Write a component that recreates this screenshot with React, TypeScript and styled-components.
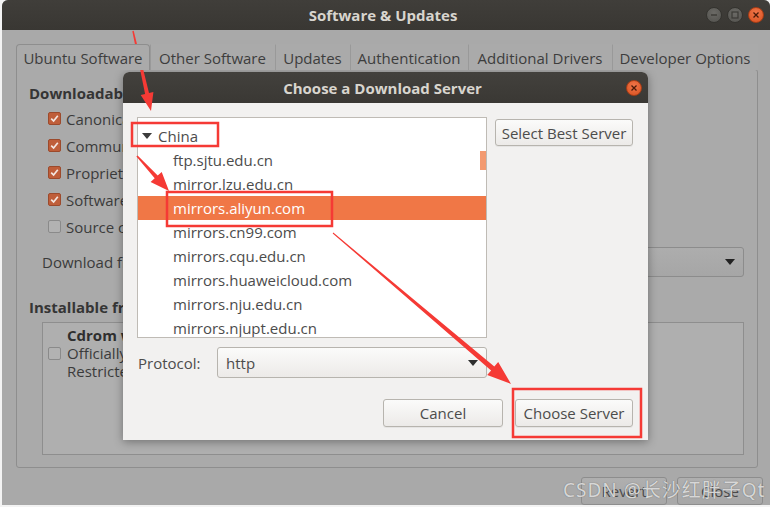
import React from "react";
import styled, { createGlobalStyle } from "styled-components";

const GlobalStyle = createGlobalStyle`
  html, body {
    margin: 0;
    padding: 0;
    background: #f3f3f3;
  }
  body {
    font-family: "Open Sans", "Noto Sans", sans-serif;
    font-size: 15px;
    color: #3b3b3b;
  }
  * {
    box-sizing: border-box;
  }
`;

const Stage = styled.div`
  position: relative;
  width: 770px;
  height: 507px;
  overflow: hidden;
  padding: 0 0 2px 2px;
  background: #f3f3f3;
`;

const Window = styled.div`
  width: 768px;
  height: 505px;
  display: flex;
  flex-direction: column;
  background: #a9a9a9;
  border-radius: 6px 6px 0 0;
  overflow: hidden;
`;

const TitleBar = styled.div`
  flex: none;
  height: 30px;
  display: grid;
  grid-template-columns: 1fr auto 1fr;
  align-items: center;
  padding-right: 6px;
  background: linear-gradient(#403e3a, #393733);
`;

const TitleText = styled.div`
  grid-column: 2;
  font-weight: bold;
  font-size: 15px;
  color: #d8d5ce;
`;

const Controls = styled.div`
  grid-column: 3;
  justify-self: end;
  display: flex;
  gap: 5px;
`;

const CtrlButton = styled.div<{ $close?: boolean }>`
  width: 16px;
  height: 16px;
  border-radius: 50%;
  display: flex;
  align-items: center;
  justify-content: center;
  background: ${(p) =>
    p.$close
      ? "radial-gradient(circle at 50% 35%, #f0764a, #d9511f)"
      : "radial-gradient(circle at 50% 35%, #6b6a66, #52514d)"};
  border: 1px solid ${(p) => (p.$close ? "#a83d16" : "#34332f")};
`;

const Body = styled.div`
  flex: 1;
  display: flex;
  flex-direction: column;
  padding: 14px 12px 0 14px;
`;

const TabRow = styled.div`
  display: flex;
  height: 26px;
  margin-bottom: -1px;
  position: relative;
  z-index: 1;
`;

const Tab = styled.div<{ $active?: boolean; $w: number }>`
  width: ${(p) => p.$w}px;
  height: 26px;
  display: flex;
  align-items: center;
  justify-content: center;
  color: #3d3d3d;
  white-space: nowrap;
  border: 1px solid ${(p) => (p.$active ? "#8e8e8e" : "transparent")};
  border-bottom: none;
  border-radius: ${(p) => (p.$active ? "4px 4px 0 0" : "0")};
  background: #aaaaaa;
  & + & {
    border-left: 1px solid #999999;
  }
`;

const Panel = styled.div`
  height: 399px;
  border: 1px solid #8e8e8e;
  border-radius: 0 3px 3px 3px;
  background: #aaaaaa;
  padding: 14px 13px 0 12px;
  display: flex;
  flex-direction: column;
`;

const SectionHeading = styled.div<{ $gap?: number }>`
  font-weight: bold;
  line-height: 18px;
  color: #353535;
  margin-top: ${(p) => p.$gap ?? 0}px;
  white-space: nowrap;
`;

const CheckList = styled.div`
  display: flex;
  flex-direction: column;
  margin-top: 3px;
  padding-left: 19px;
`;

const CheckRow = styled.div`
  height: 27px;
  display: flex;
  align-items: center;
  gap: 5px;
  white-space: nowrap;
`;

const Check = styled.span<{ $on?: boolean }>`
  flex: none;
  width: 13px;
  height: 13px;
  border-radius: 2px;
  display: inline-flex;
  align-items: center;
  justify-content: center;
  background: ${(p) => (p.$on ? "#bf5e3a" : "#b2b2b2")};
  border: 1px solid ${(p) => (p.$on ? "#9c4a2c" : "#8a8a8a")};
`;

const DownloadRow = styled.div`
  display: flex;
  align-items: center;
  height: 30px;
  margin-top: 7px;
  padding-left: 13px;
  white-space: nowrap;
`;

const WideCombo = styled.div`
  flex: 1;
  height: 30px;
  margin-left: 30px;
  border: 1px solid #8c8c8c;
  border-radius: 3px;
  background: linear-gradient(#adadad, #a6a6a6);
  display: flex;
  align-items: center;
  justify-content: flex-end;
  padding-right: 8px;
`;

const CdBox = styled.div`
  margin: 6px 0 0 13px;
  height: 133px;
  border: 1px solid #8e8e8e;
  background: #afafaf;
  display: grid;
  grid-template-columns: 24px 1fr;
  align-items: center;
  align-content: start;
  padding-top: 3px;
`;

const CdText = styled.div`
  grid-column: 2;
  line-height: 18px;
  white-space: nowrap;
`;

const CdTitle = styled(CdText)`
  font-weight: bold;
  color: #2f2f2f;
`;

const CdCheck = styled.div`
  grid-column: 1;
  grid-row: 2;
  padding-left: 5px;
  display: flex;
`;

const BottomBar = styled.div`
  display: flex;
  justify-content: flex-end;
  gap: 10px;
  margin-top: 9px;
  margin-right: -5px;
`;

const DimButton = styled.div<{ $w: number }>`
  width: ${(p) => p.$w}px;
  height: 28px;
  border: 1px solid #8d8d8d;
  border-radius: 3px;
  background: linear-gradient(#afafaf, #a7a7a7);
  display: flex;
  align-items: center;
  justify-content: center;
  color: #4a4a4a;
`;

/* ---------- dialog ---------- */

const Dialog = styled.div`
  position: absolute;
  left: 123px;
  top: 72px;
  width: 525px;
  height: 368px;
  display: flex;
  flex-direction: column;
  background: #f2f1f0;
  border-radius: 6px 6px 0 0;
  box-shadow: 0 2px 10px rgba(0, 0, 0, 0.35);
  overflow: hidden;
`;

const DialogTitle = styled.div`
  flex: none;
  height: 31px;
  display: grid;
  grid-template-columns: 1fr auto 1fr;
  align-items: center;
  padding-right: 6px;
  background: linear-gradient(#43413d, #3a3834);
`;

const DialogBody = styled.div`
  flex: 1;
  display: flex;
  flex-direction: column;
  padding: 14px 15px 13px 14px;
`;

const TopRow = styled.div`
  display: flex;
  gap: 8px;
`;

const ServerList = styled.div`
  position: relative;
  width: 350px;
  height: 221px;
  background: #ffffff;
  border: 1px solid #bfbbb5;
  padding-top: 6px;
  overflow: hidden;
`;

const ListRow = styled.div<{ $selected?: boolean; $indent: number }>`
  height: 24px;
  display: flex;
  align-items: center;
  padding-left: ${(p) => p.$indent}px;
  white-space: nowrap;
  color: ${(p) => (p.$selected ? "#ffffff" : "#4c4c4c")};
  background: ${(p) => (p.$selected ? "#f07746" : "transparent")};
`;

const Expander = styled.span`
  width: 0;
  height: 0;
  border-left: 5px solid transparent;
  border-right: 5px solid transparent;
  border-top: 6px solid #3c3c3c;
  margin-right: 6px;
`;

const ScrollThumb = styled.div`
  position: absolute;
  right: 0;
  top: 33px;
  width: 6px;
  height: 19px;
  background: #f39a70;
`;

const SideColumn = styled.div`
  padding-top: 2px;
`;

const Button = styled.div<{ $w: number; $h?: number }>`
  width: ${(p) => p.$w}px;
  height: ${(p) => p.$h ?? 28}px;
  border: 1px solid #b7b4ae;
  border-radius: 3px;
  background: linear-gradient(#fbfbfa, #eceae8);
  box-shadow: 0 1px 0 rgba(0, 0, 0, 0.05);
  display: flex;
  align-items: center;
  justify-content: center;
  color: #4c4c4c;
  white-space: nowrap;
`;

const ProtocolRow = styled.div`
  display: flex;
  align-items: center;
  height: 31px;
  margin-top: 9px;
  padding-left: 1px;
`;

const ProtocolLabel = styled.div`
  width: 79px;
  color: #4c4c4c;
`;

const Combo = styled.div`
  width: 270px;
  height: 31px;
  border: 1px solid #b7b4ae;
  border-radius: 3px;
  background: linear-gradient(#fbfbfa, #eceae8);
  display: flex;
  align-items: center;
  justify-content: space-between;
  padding: 0 8px;
  color: #4c4c4c;
`;

const ButtonRow = styled.div`
  display: flex;
  justify-content: flex-end;
  gap: 12px;
  margin-top: 21px;
`;

/* ---------- annotations ---------- */

const Overlay = styled.svg`
  position: absolute;
  left: 0;
  top: 0;
  pointer-events: none;
`;

const Watermark = styled.div`
  position: absolute;
  left: 563px;
  top: 475px;
  font-family: "Noto Sans", "Noto Sans CJK SC", sans-serif;
  font-size: 19px;
  color: rgba(236, 236, 236, 0.85);
  text-shadow: 0 0 1px rgba(60, 60, 60, 0.7);
  white-space: nowrap;
  letter-spacing: 1px;
`;

const ARROW_RED = "#f53a35";

function arrowPoints(
  x1: number,
  y1: number,
  x2: number,
  y2: number,
  head: number,
  headW: number,
  w0: number,
  w1: number
) {
  const dx = x2 - x1;
  const dy = y2 - y1;
  const len = Math.hypot(dx, dy);
  const ux = dx / len;
  const uy = dy / len;
  const px = -uy;
  const py = ux;
  const bx = x2 - ux * head;
  const by = y2 - uy * head;
  const pts = [
    [x1 + (px * w0) / 2, y1 + (py * w0) / 2],
    [bx + (px * w1) / 2, by + (py * w1) / 2],
    [bx + (px * headW) / 2, by + (py * headW) / 2],
    [x2, y2],
    [bx - (px * headW) / 2, by - (py * headW) / 2],
    [bx - (px * w1) / 2, by - (py * w1) / 2],
    [x1 - (px * w0) / 2, y1 - (py * w0) / 2],
  ];
  return pts.map((p) => p.map((n) => n.toFixed(1)).join(",")).join(" ");
}

const arrows = [
  { x1: 133, y1: 31, x2: 151, y2: 111, head: 18, headW: 13, w0: 1.5, w1: 4 },
  { x1: 137, y1: 156, x2: 169, y2: 191, head: 19, headW: 15, w0: 1.5, w1: 4 },
  { x1: 333, y1: 233, x2: 511, y2: 384, head: 24, headW: 17, w0: 1, w1: 5 },
];

const boxes = [
  { x: 132, y: 123, w: 86, h: 23 },
  { x: 167, y: 192, w: 165, h: 34 },
  { x: 513, y: 389, w: 128, h: 48 },
];

const servers = [
  "ftp.sjtu.edu.cn",
  "mirror.lzu.edu.cn",
  "mirrors.aliyun.com",
  "mirrors.cn99.com",
  "mirrors.cqu.edu.cn",
  "mirrors.huaweicloud.com",
  "mirrors.nju.edu.cn",
  "mirrors.njupt.edu.cn",
];

const sources: [string, boolean][] = [
  ["Canonical-supported free and open-source software (main)", true],
  ["Community-maintained free and open-source software (universe)", true],
  ["Proprietary drivers for devices (restricted)", true],
  ["Software restricted by copyright or legal issues (multiverse)", true],
  ["Source code", false],
];

const tabs: [string, number][] = [
  ["Ubuntu Software", 134],
  ["Other Software", 125],
  ["Updates", 75],
  ["Authentication", 118],
  ["Additional Drivers", 144],
  ["Developer Options", 146],
];

function Tick() {
  return (
    <svg width="9" height="9" viewBox="0 0 9 9">
      <path d="M1.2 4.6 L3.6 7 L7.8 1.8" fill="none" stroke="#f3e6e0" strokeWidth="1.7" />
    </svg>
  );
}

function DownArrow({ color = "#3c3c3c" }: { color?: string }) {
  return (
    <svg width="10" height="6" viewBox="0 0 10 6">
      <path d="M0 0 H10 L5 6 Z" fill={color} />
    </svg>
  );
}

function CloseGlyph() {
  return (
    <svg width="8" height="8" viewBox="0 0 8 8">
      <path d="M1.5 1.5 L6.5 6.5 M6.5 1.5 L1.5 6.5" stroke="#4a1a08" strokeWidth="1.3" />
    </svg>
  );
}

function WindowControls() {
  return (
    <Controls>
      <CtrlButton>
        <svg width="8" height="8" viewBox="0 0 8 8">
          <path d="M1 4 H7" stroke="#3b3a36" strokeWidth="1.4" />
        </svg>
      </CtrlButton>
      <CtrlButton>
        <svg width="8" height="8" viewBox="0 0 8 8">
          <rect x="1" y="1" width="6" height="6" fill="none" stroke="#3b3a36" strokeWidth="1.2" />
        </svg>
      </CtrlButton>
      <CtrlButton $close>
        <CloseGlyph />
      </CtrlButton>
    </Controls>
  );
}

export default function App() {
  return (
    <Stage>
      <GlobalStyle />
      <Window>
        <TitleBar>
          <TitleText>Software &amp; Updates</TitleText>
          <WindowControls />
        </TitleBar>
        <Body>
          <TabRow>
            {tabs.map(([label, w], i) => (
              <Tab key={label} $w={w} $active={i === 0}>
                {label}
              </Tab>
            ))}
          </TabRow>
          <Panel>
            <SectionHeading>Downloadable from the Internet</SectionHeading>
            <CheckList>
              {sources.map(([label, on]) => (
                <CheckRow key={label}>
                  <Check $on={on}>{on && <Tick />}</Check>
                  {label}
                </CheckRow>
              ))}
            </CheckList>
            <DownloadRow>
              Download from:
              <WideCombo>
                <DownArrow color="#222222" />
              </WideCombo>
            </DownloadRow>
            <SectionHeading $gap={21}>Installable from CD-ROM/DVD</SectionHeading>
            <CdBox>
              <CdTitle>Cdrom with Ubuntu 18.04 'Bionic Beaver'</CdTitle>
              <CdCheck>
                <Check />
              </CdCheck>
              <CdText>Officially supported</CdText>
              <CdText>Restricted copyright</CdText>
            </CdBox>
          </Panel>
          <BottomBar>
            <DimButton $w={86}>Revert</DimButton>
            <DimButton $w={86}>Close</DimButton>
          </BottomBar>
        </Body>
      </Window>

      <Dialog>
        <DialogTitle>
          <TitleText>Choose a Download Server</TitleText>
          <Controls>
            <CtrlButton $close>
              <CloseGlyph />
            </CtrlButton>
          </Controls>
        </DialogTitle>
        <DialogBody>
          <TopRow>
            <ServerList>
              <ListRow $indent={4}>
                <Expander />
                China
              </ListRow>
              {servers.map((s) => (
                <ListRow key={s} $indent={35} $selected={s === "mirrors.aliyun.com"}>
                  {s}
                </ListRow>
              ))}
              <ScrollThumb />
            </ServerList>
            <SideColumn>
              <Button $w={138} $h={27}>
                Select Best Server
              </Button>
            </SideColumn>
          </TopRow>
          <ProtocolRow>
            <ProtocolLabel>Protocol:</ProtocolLabel>
            <Combo>
              http
              <DownArrow color="#2e2e2e" />
            </Combo>
          </ProtocolRow>
          <ButtonRow>
            <Button $w={120}>Cancel</Button>
            <Button $w={118}>Choose Server</Button>
          </ButtonRow>
        </DialogBody>
      </Dialog>

      <Overlay width="770" height="507" viewBox="0 0 770 507">
        {boxes.map((b, i) => (
          <rect
            key={i}
            x={b.x}
            y={b.y}
            width={b.w}
            height={b.h}
            fill="none"
            stroke={ARROW_RED}
            strokeWidth="2.5"
          />
        ))}
        {arrows.map((a, i) => (
          <polygon
            key={i}
            points={arrowPoints(a.x1, a.y1, a.x2, a.y2, a.head, a.headW, a.w0, a.w1)}
            fill={ARROW_RED}
          />
        ))}
      </Overlay>
      <Watermark>CSDN @长沙红胖子Qt</Watermark>
    </Stage>
  );
}
